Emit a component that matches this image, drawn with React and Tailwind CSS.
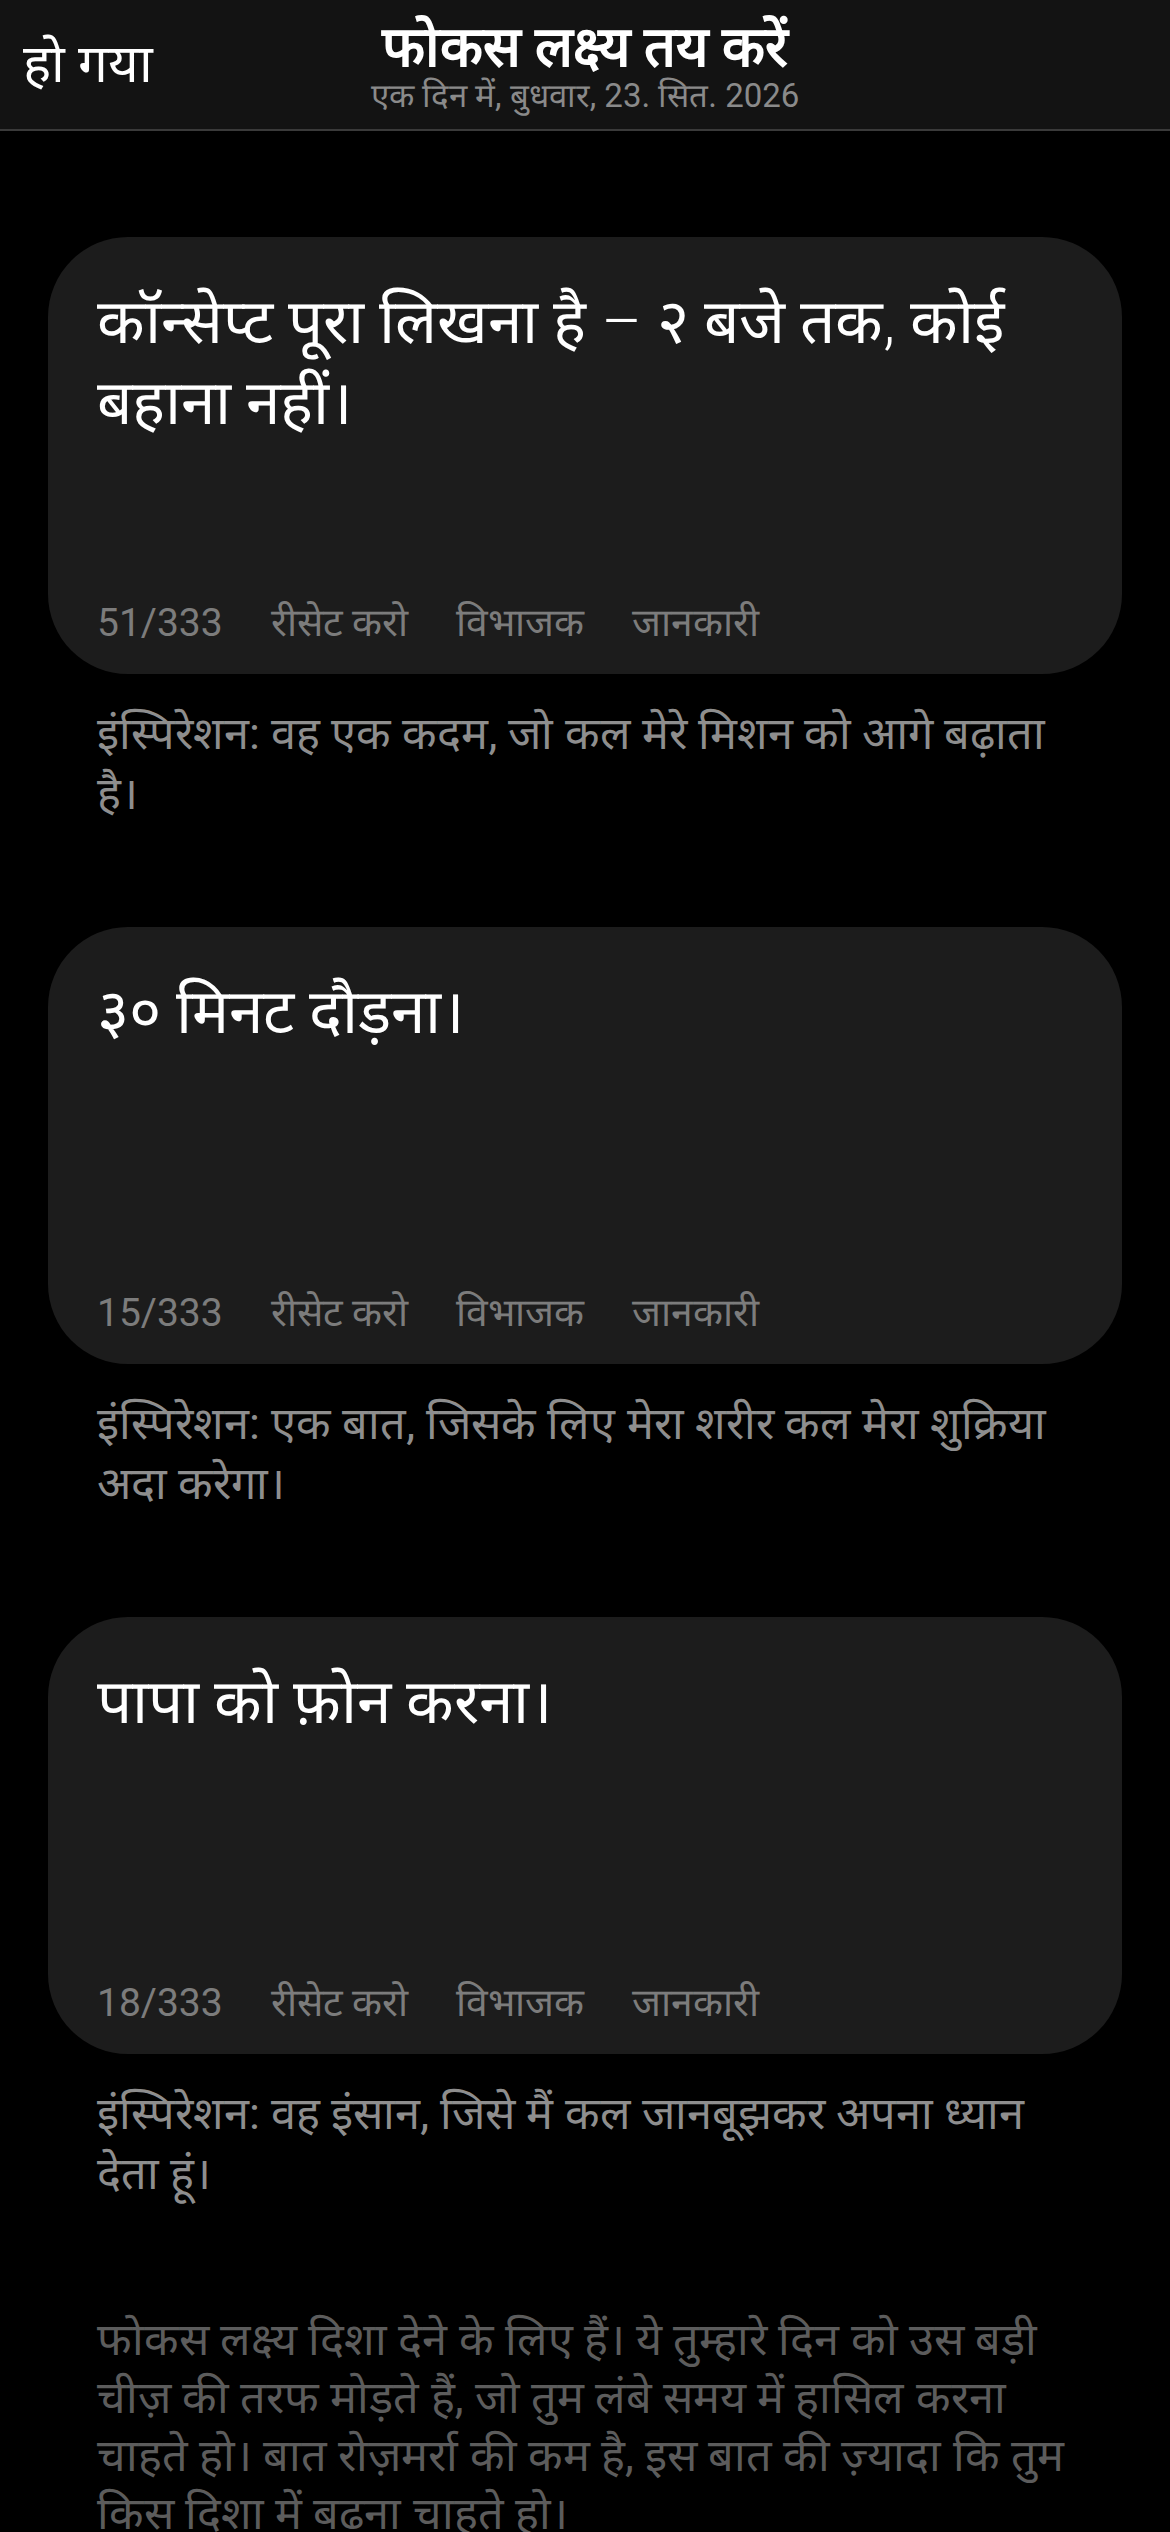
const goals = [
  {
    text: "कॉन्सेप्ट पूरा लिखना है – २ बजे तक, कोई बहाना नहीं।",
    count: "51/333",
    inspiration: "इंस्पिरेशन: वह एक कदम, जो कल मेरे मिशन को आगे बढ़ाता है।",
  },
  {
    text: "३० मिनट दौड़ना।",
    count: "15/333",
    inspiration: "इंस्पिरेशन: एक बात, जिसके लिए मेरा शरीर कल मेरा शुक्रिया अदा करेगा।",
  },
  {
    text: "पापा को फ़ोन करना।",
    count: "18/333",
    inspiration: "इंस्पिरेशन: वह इंसान, जिसे मैं कल जानबूझकर अपना ध्यान देता हूं।",
  },
];

const font = { fontFamily: 'Roboto, sans-serif' };

function GoalCard({ goal }) {
  return (
    <div>
      <div className="h-[437px] rounded-[80px] bg-[#1c1c1c] px-[49px] pt-[44px] pb-[22px] flex flex-col justify-between">
        <p className="text-[62px] leading-[81px] font-light text-white">{goal.text}</p>
        <div className="flex items-center gap-[48px] text-[39px] text-[#7c7c7c]">
          <span>{goal.count}</span>
          <span>रीसेट करो</span>
          <span>विभाजक</span>
          <span>जानकारी</span>
        </div>
      </div>
      <p className="mt-[30px] px-[49px] text-[45px] leading-[60px] text-[#8e8e8e]">
        {goal.inspiration}
      </p>
    </div>
  );
}

export default function App() {
  return (
    <div className="min-h-[2532px] bg-black" style={font}>
      {/* Nav bar */}
      <header className="relative h-[131px] bg-[#131313] border-b-2 border-[#3a3a3a] flex items-center justify-center">
        <button className="absolute left-[23px] top-[34px] text-[53px] leading-[60px] text-white">हो गया</button>
        <div className="flex flex-col items-center">
          <h1 className="text-[56px] leading-[62px] font-bold text-white">फोकस लक्ष्य तय करें</h1>
          <p className="text-[33px] leading-[36px] text-[#8a8a8a]">एक दिन में, बुधवार, 23. सित. 2026</p>
        </div>
      </header>

      <main className="px-[48px] pt-[106px] flex flex-col gap-[103px]">
        {goals.map((goal, i) => (
          <GoalCard key={i} goal={goal} />
        ))}
      </main>

      <p className="mt-[107px] px-[97px] text-[45px] leading-[58px] text-[#5c5c5c]">
        फोकस लक्ष्य दिशा देने के लिए हैं। ये तुम्हारे दिन को उस बड़ी चीज़ की तरफ मोड़ते हैं, जो तुम लंबे समय में हासिल करना चाहते हो। बात रोज़मर्रा की कम है, इस बात की ज़्यादा कि तुम किस दिशा में बढना चाहते हो।
      </p>
    </div>
  );
}
